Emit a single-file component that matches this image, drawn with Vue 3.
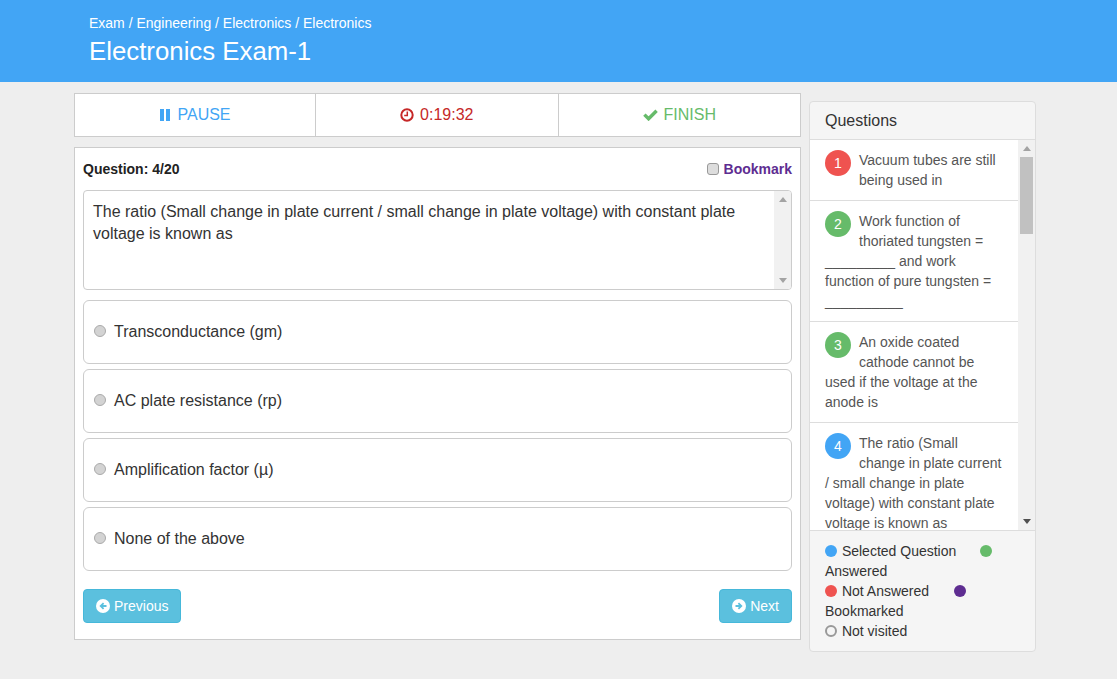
<script setup>
const options = [
  'Transconductance (gm)',
  'AC plate resistance (rp)',
  'Amplification factor (µ)',
  'None of the above'
]

const questions = [
  { n: 1, state: 'red', text: 'Vacuum tubes are still being used in' },
  { n: 2, state: 'green', text: 'Work function of thoriated tungsten = _________ and work function of pure tungsten = __________' },
  { n: 3, state: 'green', text: 'An oxide coated cathode cannot be used if the voltage at the anode is' },
  { n: 4, state: 'blue', text: 'The ratio (Small change in plate current / small change in plate voltage) with constant plate voltage is known as' }
]
</script>

<template>
  <div class="page">
    <header class="top">
      <div class="crumbs">Exam / Engineering / Electronics / Electronics</div>
      <h1 class="title">Electronics Exam-1</h1>
    </header>

    <div class="content">
      <main class="left">
        <div class="actions">
          <div class="action pause">
            <svg class="ic" viewBox="0 0 12 14" width="12" height="14"><path fill="currentColor" d="M1 1h4v12H1zM7 1h4v12H7z" /></svg>
            PAUSE
          </div>
          <div class="action timer">
            <svg class="ic" viewBox="0 0 14 14" width="14" height="14"><circle cx="7" cy="7" r="5.7" fill="none" stroke="currentColor" stroke-width="2" /><path fill="none" stroke="currentColor" stroke-width="1.5" d="M7.3 3.4v4H4.2" /></svg>
            0:19:32
          </div>
          <div class="action finish">
            <svg class="ic" viewBox="0 0 15 12" width="15" height="12"><path fill="none" stroke="currentColor" stroke-width="3.4" d="M1.4 5.6l4.2 4.2 8-8" /></svg>
            FINISH
          </div>
        </div>

        <section class="card">
          <div class="q-head">
            <strong class="q-count">Question: 4/20</strong>
            <label class="bookmark"><input type="checkbox" class="check" />Bookmark</label>
          </div>

          <div class="q-box">
            <p class="q-text">The ratio (Small change in plate current / small change in plate voltage) with constant plate voltage is known as</p>
            <div class="bar">
              <i class="arrow up"></i>
              <i class="arrow down"></i>
            </div>
          </div>

          <label v-for="opt in options" :key="opt" class="option">
            <span class="radio"></span>{{ opt }}
          </label>

          <div class="nav">
            <button type="button" class="btn">
              <svg viewBox="0 0 14 14" width="14" height="14"><circle cx="7" cy="7" r="7" fill="#fff" /><path fill="none" stroke="#5bc0de" stroke-width="1.8" d="M10.5 7H5M7.6 4.2L4.7 7l2.9 2.8" /></svg>
              Previous
            </button>
            <button type="button" class="btn">
              <svg viewBox="0 0 14 14" width="14" height="14"><circle cx="7" cy="7" r="7" fill="#fff" /><path fill="none" stroke="#5bc0de" stroke-width="1.8" d="M3.5 7H9M6.4 4.2L9.3 7l-2.9 2.8" /></svg>
              Next
            </button>
          </div>
        </section>
      </main>

      <aside class="panel">
        <div class="panel-head">Questions</div>
        <div class="panel-body">
          <ul class="list">
            <li v-for="q in questions" :key="q.n" class="row">
              <span class="num" :class="q.state">{{ q.n }}</span>{{ q.text }}
            </li>
          </ul>
          <div class="bar">
            <i class="arrow up"></i>
            <b class="thumb"></b>
            <i class="arrow down"></i>
          </div>
        </div>
        <div class="legend">
          <span class="dot blue"></span> Selected Question <span class="dot green gap"></span> Answered<br />
          <span class="dot red"></span> Not Answered <span class="dot purple gap"></span> Bookmarked<br />
          <span class="dot ring"></span> Not visited
        </div>
      </aside>
    </div>
  </div>
</template>

<style scoped>
.page {
  min-height: 679px;
  background: #eee;
  color: #333;
  font-family: "Liberation Sans", Arial, sans-serif;
  font-size: 14px;
  line-height: 20px;
}

.top {
  height: 82px;
  box-sizing: border-box;
  padding: 13px 0 0 89px;
  background: #42a5f5;
  color: #fff;
}

.title {
  margin: 3px 0 0;
  font-size: 25.8px;
  font-weight: 400;
  line-height: 30px;
}

.content {
  display: flex;
  align-items: flex-start;
  gap: 8px;
  padding: 11px 0 0 74px;
}

.left {
  width: 727px;
}

.actions {
  display: flex;
  height: 44px;
  box-sizing: border-box;
  background: #fff;
  border: 1px solid #ccc;
}

.action {
  flex: 1;
  box-sizing: border-box;
  display: flex;
  align-items: center;
  justify-content: center;
  gap: 6px;
  font-size: 16px;
}

.action:first-child {
  flex: 0 0 241px;
}

.action:not(:last-child) {
  border-right: 1px solid #ccc;
}

.pause { color: #42a5f5; }
.timer { color: #c62828; }
.finish { color: #66bb6a; }

.card {
  margin-top: 10px;
  padding: 11px 8px 16px;
  background: #fff;
  border: 1px solid #ccc;
}

.q-head {
  display: flex;
  justify-content: space-between;
  align-items: center;
  height: 20px;
  margin-bottom: 11px;
}

.q-count {
  color: #222;
}

.bookmark {
  display: flex;
  align-items: center;
  gap: 5px;
  color: #5e2d91;
  font-weight: 700;
}

.check {
  appearance: none;
  width: 12px;
  height: 12px;
  margin: 0;
  background: #ddd;
  border: 1px solid #999;
  border-radius: 3px;
}

.q-box {
  display: flex;
  height: 100px;
  box-sizing: border-box;
  margin-bottom: 10px;
  border: 1px solid #ccc;
  border-radius: 4px;
  overflow: hidden;
}

.q-text {
  flex: 1;
  margin: 0;
  padding: 10px 9px;
  font-size: 16px;
  line-height: 22px;
}

.bar {
  flex: none;
  display: flex;
  flex-direction: column;
  align-items: center;
  width: 17px;
  background: #f1f1f1;
}

.arrow {
  width: 0;
  height: 0;
  border-left: 4px solid transparent;
  border-right: 4px solid transparent;
}

.arrow.up {
  margin-top: 6px;
  border-bottom: 5px solid #a3a3a3;
}

.arrow.down {
  margin-top: auto;
  margin-bottom: 6px;
  border-top: 5px solid #505050;
}

.q-box .arrow.down {
  border-top-color: #a3a3a3;
}

.thumb {
  width: 13px;
  height: 77px;
  margin-top: 6px;
  background: #c1c1c1;
}

.option {
  display: flex;
  align-items: center;
  height: 64px;
  box-sizing: border-box;
  margin-bottom: 5px;
  padding-left: 10px;
  border: 1px solid #ccc;
  border-radius: 6px;
  font-size: 16px;
}

.radio {
  width: 12px;
  height: 12px;
  box-sizing: border-box;
  margin: 0 8px 2px 0;
  background: #d3d3d3;
  border: 1px solid #aaa;
  border-radius: 50%;
}

.nav {
  display: flex;
  justify-content: space-between;
  margin-top: 18px;
}

.btn {
  display: flex;
  align-items: center;
  gap: 4px;
  height: 34px;
  padding: 0 12px;
  background: #5bc0de;
  border: 1px solid #46b8da;
  border-radius: 4px;
  color: #fff;
  font: inherit;
}

.panel {
  width: 227px;
  margin-top: 8px;
  box-sizing: border-box;
  background: #f5f5f5;
  border: 1px solid #ddd;
  border-radius: 4px;
  overflow: hidden;
}

.panel-head {
  height: 38px;
  box-sizing: border-box;
  padding: 9px 15px;
  border-bottom: 1px solid #ddd;
  font-size: 16px;
}

.panel-body {
  display: flex;
  height: 390px;
  border-bottom: 1px solid #ddd;
  background: #f1f1f1;
}

.list {
  flex: 1;
  margin: 0;
  padding: 0;
  list-style: none;
  background: #fff;
  overflow: hidden;
}

.row {
  padding: 10px 15px;
  border-bottom: 1px solid #ddd;
  color: #555;
}

.num {
  float: left;
  width: 26px;
  height: 26px;
  margin-right: 8px;
  border-radius: 50%;
  color: #fff;
  font-size: 14px;
  line-height: 26px;
  text-align: center;
}

.num.red, .dot.red { background: #ef5350; }
.num.green, .dot.green { background: #66bb6a; }
.num.blue, .dot.blue { background: #42a5f5; }

.legend {
  padding: 10px 15px;
}

.dot {
  display: inline-block;
  width: 12px;
  height: 12px;
  box-sizing: border-box;
  margin-right: 1px;
  border-radius: 50%;
  vertical-align: -1px;
}

.dot.gap {
  margin-left: 20px;
}

.dot.purple {
  margin-left: 21px;
  background: #5e2d91;
}

.dot.ring {
  border: 2px solid #999;
  background: #f5f5f5;
}
</style>

<style>
html, body {
  margin: 0;
  background: #eee;
}
</style>
